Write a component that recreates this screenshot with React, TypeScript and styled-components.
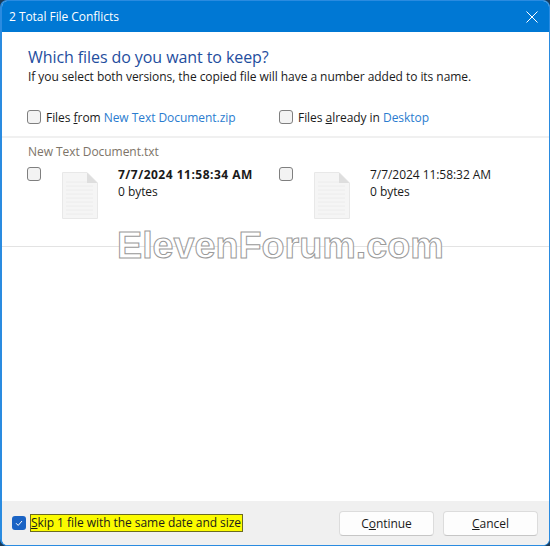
import styled, { createGlobalStyle } from 'styled-components';

const GlobalStyle = createGlobalStyle`
  html, body {
    margin: 0;
    padding: 0;
    background: #1b3a57;
  }
  #root {
    width: 550px;
    height: 546px;
  }
`;

const WindowSC = styled.div`
  position: relative;
  box-sizing: border-box;
  width: 550px;
  height: 546px;
  display: flex;
  flex-direction: column;
  overflow: hidden;
  border-radius: 7px;
  border: 1px solid #2a8be0;
  border-left-width: 2px;
  background: #fff;
  font-family: 'Open Sans', 'Noto Sans', sans-serif;
  font-size: 12px;
  letter-spacing: -0.05px;
  color: #1a1a1a;
`;

const TitleBar = styled.div`
  flex: none;
  height: 31px;
  display: flex;
  align-items: center;
  justify-content: space-between;
  padding: 0 11px 0 7px;
  background: #0078d4;
  color: #fff;
  font-size: 12px;
`;

const CloseButton = styled.button`
  border: 0;
  padding: 0;
  background: none;
  display: flex;
  color: #fff;
`;

const Header = styled.div`
  flex: none;
  height: 71px;
  display: flex;
  flex-direction: column;
  padding: 13px 0 0 26px;
  box-sizing: border-box;
`;

const Heading = styled.div`
  font-size: 16px;
  line-height: 24px;
  letter-spacing: -0.08px;
  color: #1f4e9e;
`;

const SubHeading = styled.div`
  font-size: 12px;
  line-height: 16px;
`;

const SourceRow = styled.div`
  flex: none;
  box-sizing: border-box;
  height: 35px;
  display: flex;
  align-items: center;
  padding: 0 0 5px 25px;
  border-bottom: 2px solid #f0f0f0;
`;

const SourceCell = styled.div<{ $width: number }>`
  width: ${(p) => p.$width}px;
  display: flex;
  align-items: center;
  gap: 5px;
`;

const Box = styled.span`
  display: block;
  box-sizing: border-box;
  flex: none;
  width: 14px;
  height: 14px;
  border: 1px solid #7f7f7f;
  border-radius: 3px;
  background: #f3f3f3;
`;

const CheckedBox = styled.span`
  box-sizing: border-box;
  flex: none;
  width: 14px;
  height: 14px;
  border-radius: 3px;
  background: #1a63c4;
  display: flex;
  align-items: center;
  justify-content: center;
`;

const Link = styled.span`
  color: #2a7ccf;
`;

const Key = styled.span`
  text-decoration: underline;
`;

const ConflictGroup = styled.div`
  flex: none;
  box-sizing: border-box;
  height: 109px;
  padding: 0 0 0 25px;
  border-bottom: 1px solid #e3e3e3;
`;

const ConflictName = styled.div`
  padding: 5px 0 0 1px;
  line-height: 17px;
  color: #7d7468;
`;

const ConflictRow = styled.div`
  display: flex;
  margin-top: 6px;
`;

const Version = styled.div`
  width: 252px;
  display: flex;
`;

const BoxSlot = styled.div`
  width: 35px;
  padding-top: 1px;
`;

const FileSlot = styled.div`
  width: 56px;
  padding-top: 6px;
`;

const Meta = styled.div`
  line-height: 17px;
`;

const MetaDate = styled.div<{ $bold?: boolean }>`
  font-weight: ${(p) => (p.$bold ? 700 : 400)};
  letter-spacing: ${(p) => (p.$bold ? '0.5px' : '-0.05px')};
`;

const Spacer = styled.div`
  flex: 1;
`;

const Footer = styled.div`
  flex: none;
  height: 44px;
  display: flex;
  align-items: center;
  justify-content: space-between;
  padding: 0 11px 0 10px;
  background: #f0f0f0;
`;

const SkipLabel = styled.div`
  display: flex;
  align-items: center;
  gap: 5px;
`;

const Marked = styled.span`
  background: #fbfb00;
  outline: 1px solid #6b6b20;
  padding: 0 1px 0 0;
  line-height: 16px;
`;

const Buttons = styled.div`
  display: flex;
  gap: 9px;
`;

const Button = styled.button`
  box-sizing: border-box;
  width: 95px;
  height: 25px;
  border: 1px solid #dcdcdc;
  border-bottom-color: #c6c6c6;
  border-radius: 4px;
  background: #fdfdfd;
  font: inherit;
  letter-spacing: inherit;
  color: #1a1a1a;
  padding: 0;
`;

const Watermark = styled.div`
  position: absolute;
  left: 115px;
  top: 219px;
  font-family: 'Liberation Sans', Arial, sans-serif;
  font-weight: 700;
  font-size: 37.7px;
  line-height: 50px;
  letter-spacing: 0;
  white-space: nowrap;
  color: #fff;
  -webkit-text-stroke: 1px #9a9a9a;
`;

const FileIcon = () => (
  <svg width="36" height="47" viewBox="0 0 36 47">
    <path d="M.5.5H25L35.5 11V46.5H.5Z" fill="#f5f5f5" stroke="#e8e8e8" />
    <path
      d="M4 10H31M4 14H31M4 18H31M4 22H31M4 26H31M4 30H31M4 34H31M4 38H31M4 42H31"
      stroke="#ececec"
      strokeWidth="1"
    />
    <path d="M25 .5V11H35.5Z" fill="#dedede" />
  </svg>
);

const CheckIcon = () => (
  <svg width="10" height="10" viewBox="0 0 10 10" fill="none">
    <path d="M2 5.2 4.2 7.4 8 3" stroke="#fff" strokeWidth="1" />
  </svg>
);

const versions = [
  { date: '7/7/2024 11:58:34 AM', bold: true },
  { date: '7/7/2024 11:58:32 AM', bold: false },
];

export default function App() {
  return (
    <>
      <GlobalStyle />
      <WindowSC>
        <TitleBar>
          2 Total File Conflicts
          <CloseButton aria-label="Close">
            <svg width="12" height="12" viewBox="0 0 12 12" fill="none">
              <path d="M.5.5 11.5 11.5M11.5.5.5 11.5" stroke="#fff" strokeWidth="1" />
            </svg>
          </CloseButton>
        </TitleBar>
        <Header>
          <Heading>Which files do you want to keep?</Heading>
          <SubHeading>
            If you select both versions, the copied file will have a number added to its name.
          </SubHeading>
        </Header>
        <SourceRow>
          <SourceCell $width={252}>
            <Box />
            <span>
              Files <Key>f</Key>rom <Link>New Text Document.zip</Link>
            </span>
          </SourceCell>
          <SourceCell $width={250}>
            <Box />
            <span>
              Files <Key>a</Key>lready in <Link>Desktop</Link>
            </span>
          </SourceCell>
        </SourceRow>
        <ConflictGroup>
          <ConflictName>New Text Document.txt</ConflictName>
          <ConflictRow>
            {versions.map((v) => (
              <Version key={v.date}>
                <BoxSlot>
                  <Box />
                </BoxSlot>
                <FileSlot>
                  <FileIcon />
                </FileSlot>
                <Meta>
                  <MetaDate $bold={v.bold}>{v.date}</MetaDate>
                  <div>0 bytes</div>
                </Meta>
              </Version>
            ))}
          </ConflictRow>
        </ConflictGroup>
        <Spacer />
        <Footer>
          <SkipLabel>
            <CheckedBox>
              <CheckIcon />
            </CheckedBox>
            <Marked>
              <Key>S</Key>kip 1 file with the same date and size
            </Marked>
          </SkipLabel>
          <Buttons>
            <Button>
              C<Key>o</Key>ntinue
            </Button>
            <Button>
              <Key>C</Key>ancel
            </Button>
          </Buttons>
        </Footer>
        <Watermark>ElevenForum.com</Watermark>
      </WindowSC>
    </>
  );
}
